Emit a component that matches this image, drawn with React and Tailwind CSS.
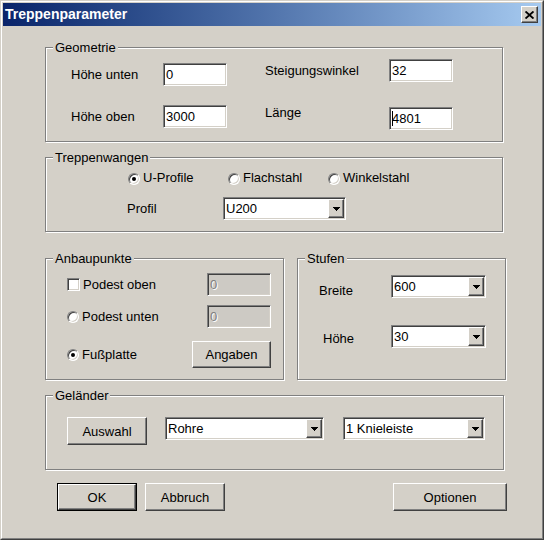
const sunken =
  "border border-t-[#808080] border-l-[#808080] border-b-white border-r-white shadow-[inset_1px_1px_0_#404040,inset_-1px_-1px_0_#d4d0c8]";
const raised =
  "border border-t-white border-l-white border-b-[#404040] border-r-[#404040] shadow-[inset_-1px_-1px_0_#808080]";

function Arrow() {
  return (
    <svg width="7" height="4" viewBox="0 0 7 4" shapeRendering="crispEdges">
      <rect x="0" y="0" width="7" height="1" fill="#000" />
      <rect x="1" y="1" width="5" height="1" fill="#000" />
      <rect x="2" y="2" width="3" height="1" fill="#000" />
      <rect x="3" y="3" width="1" height="1" fill="#000" />
    </svg>
  );
}

function CloseX() {
  return (
    <svg width="9" height="8" viewBox="0 0 9 8">
      <path d="M0.5 0.5L8.5 7.5M8.5 0.5L0.5 7.5" stroke="#000" strokeWidth="1.9" fill="none" />
    </svg>
  );
}

function Group({ title, className, children }) {
  return (
    <div
      className={`relative border border-[#808080] shadow-[1px_1px_0_#fff,inset_1px_1px_0_#fff] ${className}`}
    >
      <span className="absolute -top-[8px] left-[7px] bg-[#d4d0c8] px-[2px]">{title}</span>
      {children}
    </div>
  );
}

function Input({ value, disabled, caret, className = "w-[64px]" }) {
  return (
    <div
      className={`flex h-[23px] items-center pl-[2px] ${sunken} ${className} ${
        disabled ? "bg-[#cdcac4] text-[#808080] [text-shadow:1px_1px_0_#fff]" : "bg-white"
      }`}
    >
      {caret ? <span className="-mr-px inline-block h-[15px] w-px bg-black" /> : null}
      {value}
    </div>
  );
}

function Select({ value, className }) {
  return (
    <div className={`flex h-[23px] items-stretch bg-white ${sunken} ${className}`}>
      <span className="flex flex-1 items-center pl-[2px]">{value}</span>
      <span className={`m-px flex w-[16px] items-center justify-center bg-[#d4d0c8] ${raised}`}>
        <Arrow />
      </span>
    </div>
  );
}

function Button({ children, className, isDefault }) {
  const inner = (
    <div className={`flex h-full w-full items-center justify-center bg-[#d4d0c8] ${raised}`}>
      {children}
    </div>
  );
  return isDefault ? (
    <div className={`border border-black ${className}`}>{inner}</div>
  ) : (
    <div className={className}>{inner}</div>
  );
}

function Radio({ checked }) {
  return (
    <span className="relative flex h-[12px] w-[12px] shrink-0 items-center justify-center rounded-full border border-t-[#808080] border-l-[#808080] border-b-white border-r-white bg-white shadow-[inset_1px_1px_0_#404040,inset_-1px_-1px_0_#d4d0c8]">
      {checked ? <span className="h-[4px] w-[4px] rounded-full bg-black" /> : null}
    </span>
  );
}

function Checkbox() {
  return <span className={`h-[13px] w-[13px] shrink-0 bg-white ${sunken}`} />;
}

export default function App() {
  return (
    <div className="h-[540px] w-[544px] select-none border border-t-[#d4d0c8] border-l-[#d4d0c8] border-b-[#404040] border-r-[#404040] bg-[#d4d0c8] font-['Liberation_Sans',Arial,sans-serif] text-[13px] leading-[15px] text-black">
      <div className="flex h-full flex-col border border-t-white border-l-white border-b-[#808080] border-r-[#808080] p-px">
        {/* Titelleiste */}
        <div className="flex h-[23px] items-center bg-gradient-to-r from-[#0a246a] to-[#a6caf0] pl-[2px] pr-[3px]">
          <span className="text-[14px] font-bold text-white">Treppenparameter</span>
          <div className={`ml-auto flex h-[17px] w-[17px] items-center justify-center bg-[#d4d0c8] ${raised}`}>
            <CloseX />
          </div>
        </div>

        <div className="flex flex-1 flex-col pl-[42px]">
          {/* Geometrie */}
          <Group title="Geometrie" className="mt-[21px] flex h-[95px] w-[458px]">
            <div className="flex flex-col pl-[25px] pt-[15px]">
              <div className="flex items-center">
                <span className="w-[92px]">Höhe unten</span>
                <Input value="0" />
              </div>
              <div className="mt-[19px] flex items-center">
                <span className="w-[92px]">Höhe oben</span>
                <Input value="3000" />
              </div>
            </div>
            <div className="ml-[38px] flex flex-col pt-[11px]">
              <div className="flex items-center">
                <span className="w-[124px]">Steigungswinkel</span>
                <Input value="32" />
              </div>
              <div className="mt-[25px] flex items-start">
                <span className="w-[124px] -translate-y-[2px]">Länge</span>
                <Input value="4801" caret />
              </div>
            </div>
          </Group>

          {/* Treppenwangen */}
          <Group title="Treppenwangen" className="mt-[15px] h-[75px] w-[458px]">
            <div className="mt-[12px] flex h-[18px] items-start pl-[82px]">
              {[
                ["U-Profile", true],
                ["Flachstahl", false],
                ["Winkelstahl", false],
              ].map(([label, on]) => (
                <div key={label} className="flex w-[100px] items-start gap-[3px]">
                  <span className="mt-[3px]">
                    <Radio checked={on} />
                  </span>
                  <span>{label}</span>
                </div>
              ))}
            </div>
            <div className="mt-[9px] flex items-center pl-[81px]">
              <span className="w-[96px]">Profil</span>
              <Select value="U200" className="w-[123px]" />
            </div>
          </Group>

          <div className="mt-[26px] flex">
            {/* Anbaupunkte */}
            <Group title="Anbaupunkte" className="h-[122px] w-[239px]">
              <div className="flex flex-col pl-[21px] pt-[14px]">
                <div className="flex items-center">
                  <div className="flex w-[140px] items-center gap-[3px]">
                    <Checkbox />
                    <span>Podest oben</span>
                  </div>
                  <Input value="0" disabled />
                </div>
                <div className="mt-[9px] flex items-center">
                  <div className="flex w-[140px] items-center gap-[3px]">
                    <Radio />
                    <span>Podest unten</span>
                  </div>
                  <Input value="0" disabled />
                </div>
                <div className="mt-[13px] flex items-center">
                  <div className="flex w-[125px] items-center gap-[3px]">
                    <Radio checked />
                    <span>Fußplatte</span>
                  </div>
                  <Button className="h-[27px] w-[79px]">Angaben</Button>
                </div>
              </div>
            </Group>

            {/* Stufen */}
            <Group title="Stufen" className="ml-[13px] h-[122px] w-[209px]">
              <div className="flex flex-col pl-[21px] pt-[16px]">
                <div className="flex items-start">
                  <span className="w-[72px] pt-[8px]">Breite</span>
                  <Select value="600" className="w-[95px]" />
                </div>
                <div className="mt-[27px] flex items-start">
                  <span className="w-[72px] pl-[4px] pt-[6px]">Höhe</span>
                  <Select value="30" className="w-[95px]" />
                </div>
              </div>
            </Group>
          </div>

          {/* Geländer */}
          <Group title="Geländer" className="mt-[15px] h-[75px] w-[459px]">
            <div className="flex items-start pl-[21px] pt-[21px]">
              <Button className="h-[28px] w-[80px]">Auswahl</Button>
              <Select value="Rohre" className="ml-[18px] w-[159px]" />
              <Select value="1 Knieleiste" className="ml-[19px] w-[142px]" />
            </div>
          </Group>

          {/* Dialogknöpfe */}
          <div className="mt-[13px] flex pl-[12px]">
            <Button isDefault className="h-[28px] w-[80px]">
              OK
            </Button>
            <Button className="ml-[8px] h-[28px] w-[80px]">Abbruch</Button>
            <Button className="ml-[168px] h-[28px] w-[114px]">Optionen</Button>
          </div>
        </div>
      </div>
    </div>
  );
}
